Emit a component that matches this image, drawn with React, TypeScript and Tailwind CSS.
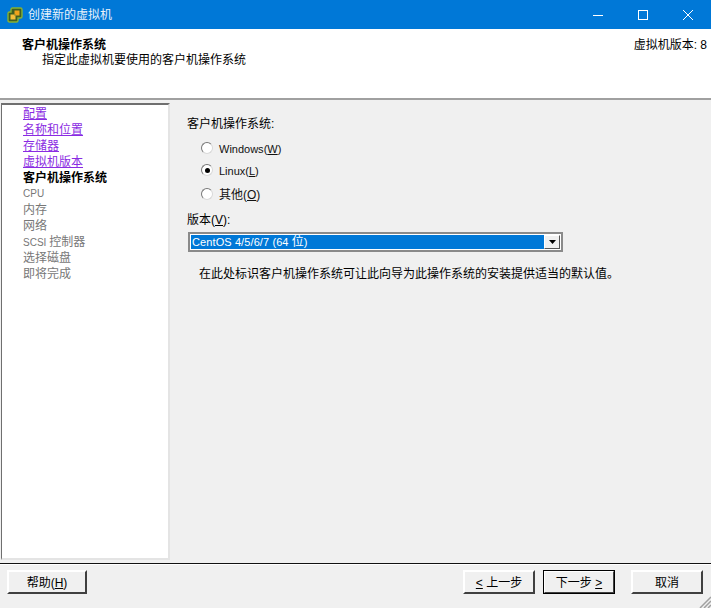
const font = "font-['Liberation_Sans','Noto_Sans_CJK_SC',sans-serif]";

const doneSteps = ["配置", "名称和位置", "存储器", "虚拟机版本"];

function AppIcon() {
  return (
    <svg width="16" height="16" viewBox="0 0 16 16" className="shrink-0">
      <path d="M5.5 1H13.5Q15 1 15 2.5V9.5Q15 11 13.5 11H11V13.5Q11 15 9.5 15H2.5Q1 15 1 13.5V6.5Q1 5 2.5 5H4V2.5Q4 1 5.5 1Z" fill="#3f5f22" stroke="#86b135" strokeWidth="1.4" />
      <rect x="7.5" y="3.5" width="5" height="5" fill="#f0a31c" />
      <rect x="3.5" y="7.5" width="5" height="5" fill="#f7bf3a" />
      <rect x="7.5" y="7.5" width="1" height="1" fill="#3f5f22" />
    </svg>
  );
}

function Radio({ checked, label, hotkey, className = "", textClass = "text-[11px]" }: { checked?: boolean; label: string; hotkey: string; className?: string; textClass?: string }) {
  return (
    <div className={`flex items-center h-[22px] pl-[13px] ${className}`}>
      <span className="w-[12px] h-[12px] rounded-full border border-t-[#777] border-l-[#777] border-r-[#d8d8d8] border-b-[#d8d8d8] bg-white flex items-center justify-center shrink-0 -mt-[2px]">
        {checked && <span className="w-[5px] h-[5px] rounded-full bg-black" />}
      </span>
      <span className={`ml-[6px] text-[#111] ${textClass}`}>
        {label}(<span className="underline">{hotkey}</span>)
      </span>
    </div>
  );
}

function WinButton({ children, primary, className }: { children: React.ReactNode; primary?: boolean; className: string }) {
  return (
    <button
      className={`h-[24px] pt-px bg-[#f0f0f0] text-[12px] text-black border-t-2 border-l-2 border-t-white border-l-white border-r-2 border-b-2 border-r-[#404040] border-b-[#404040] flex items-center justify-center ${primary ? "outline outline-1 -outline-offset-1 outline-black" : ""} ${className}`}
    >
      {children}
    </button>
  );
}

export default function App() {
  return (
    <div className={`w-[711px] h-[608px] flex flex-col bg-[#f0f0f0] overflow-hidden text-[12px] text-black ${font}`}>
      {/* title bar */}
      <div className="h-[29px] bg-[#0078d7] flex items-center pl-[7px] text-white shrink-0">
        <AppIcon />
        <span className="ml-[5px] text-[12px] text-[#e8f2fb]">创建新的虚拟机</span>
        <div className="ml-auto flex items-center">
          <div className="w-[45px] flex justify-center">
            <svg width="10" height="10" viewBox="0 0 10 10"><path d="M0 5.5H10" stroke="#fff" strokeWidth="1" /></svg>
          </div>
          <div className="w-[45px] flex justify-center">
            <svg width="10" height="10" viewBox="0 0 10 10"><rect x="0.5" y="0.5" width="9" height="9" fill="none" stroke="#fff" strokeWidth="1" /></svg>
          </div>
          <div className="w-[46px] flex justify-center">
            <svg width="10" height="10" viewBox="0 0 10 10"><path d="M0 0L10 10M10 0L0 10" stroke="#fff" strokeWidth="1" /></svg>
          </div>
        </div>
      </div>

      {/* header */}
      <div className="h-[71px] bg-white border-b-2 border-b-[#a0a0a0] flex justify-between pl-[22px] pr-[4px] pt-[8px] shrink-0">
        <div>
          <div className="font-bold leading-[16px]">客户机操作系统</div>
          <div className="pl-[20px] leading-[16px] -mt-px">指定此虚拟机要使用的客户机操作系统</div>
        </div>
        <div className="leading-[16px]">虚拟机版本: 8</div>
      </div>

      {/* body */}
      <div className="flex-1 flex min-h-0 pt-[3px] pb-[3px] pl-px">
        <div className="w-[169px] bg-white border-t-2 border-l border-t-[#6f6f6f] border-l-[#6f6f6f] border-r-2 border-b-2 border-r-[#e4e4e4] border-b-[#e4e4e4] pl-[21px] pt-px shrink-0">
          {doneSteps.map((s) => (
            <div key={s} className="h-[16px] leading-[16px] text-[#8a2be2] underline">{s}</div>
          ))}
          <div className="h-[16px] leading-[16px] font-bold">客户机操作系统</div>
          <div className="h-[16px] leading-[16px] text-[10px] text-[#777]">CPU</div>
          <div className="h-[16px] leading-[16px] text-[#777]">内存</div>
          <div className="h-[16px] leading-[16px] text-[#777]">网络</div>
          <div className="h-[16px] leading-[16px] text-[#777]"><span className="text-[10px]">SCSI </span>控制器</div>
          <div className="h-[16px] leading-[16px] text-[#777]">选择磁盘</div>
          <div className="h-[16px] leading-[16px] text-[#777]">即将完成</div>
        </div>

        <div className="flex-1 pl-[18px] pt-[13px]">
          <div className="leading-[16px] -ml-px">客户机操作系统:</div>
          <div className="mt-[6px]">
            <Radio label="Windows" hotkey="W" />
            <Radio checked label="Linux" hotkey="L" />
            <Radio label="其他" hotkey="O" className="mt-[2px]" textClass="text-[12px]" />
          </div>
          <div className="leading-[16px] mt-[6px] -ml-px">版本(<span className="underline">V</span>):</div>
          <div className="mt-[4px] w-[375px] h-[20px] bg-white border-2 border-[#8a8a8a] flex p-px">
            <div className="flex-1 bg-[#0078d7] text-white text-[11px] tracking-[0.1px] leading-[15px] pl-px">CentOS 4/5/6/7 (64 <span className="text-[12px]">位</span>)</div>
            <div className="w-[16px] bg-[#f0f0f0] border border-t-white border-l-white border-r-[#555] border-b-[#555] flex items-center justify-center">
              <svg width="7" height="4" viewBox="0 0 7 4"><path d="M0 0h7L3.5 4z" fill="#000" /></svg>
            </div>
          </div>
          <div className="pl-[11px] mt-[14px] leading-[16px]">在此处标识客户机操作系统可让此向导为此操作系统的安装提供适当的默认值。</div>
        </div>
      </div>

      {/* footer */}
      <div className="h-[45px] relative border-t border-t-[#111] shrink-0">
        <div className="h-full border-t border-t-white flex items-start pt-[5px] pl-[7px] pr-[8px]">
          <WinButton className="w-[80px]">帮助(<span className="underline">H</span>)</WinButton>
          <div className="ml-auto flex">
            <WinButton className="w-[72px]"><span className="underline">&lt;</span>&nbsp;上一步</WinButton>
            <WinButton primary className="w-[72px] ml-[8px]">下一步&nbsp;<span className="underline">&gt;</span></WinButton>
            <WinButton className="w-[72px] ml-[16px]">取消</WinButton>
          </div>
        </div>
        <svg width="12" height="12" viewBox="0 0 12 12" className="absolute right-0 bottom-0">
          <path d="M12 1L1 12M12 5L5 12M12 9L9 12" stroke="#a0a0a0" strokeWidth="1.5" />
        </svg>
      </div>
    </div>
  );
}
